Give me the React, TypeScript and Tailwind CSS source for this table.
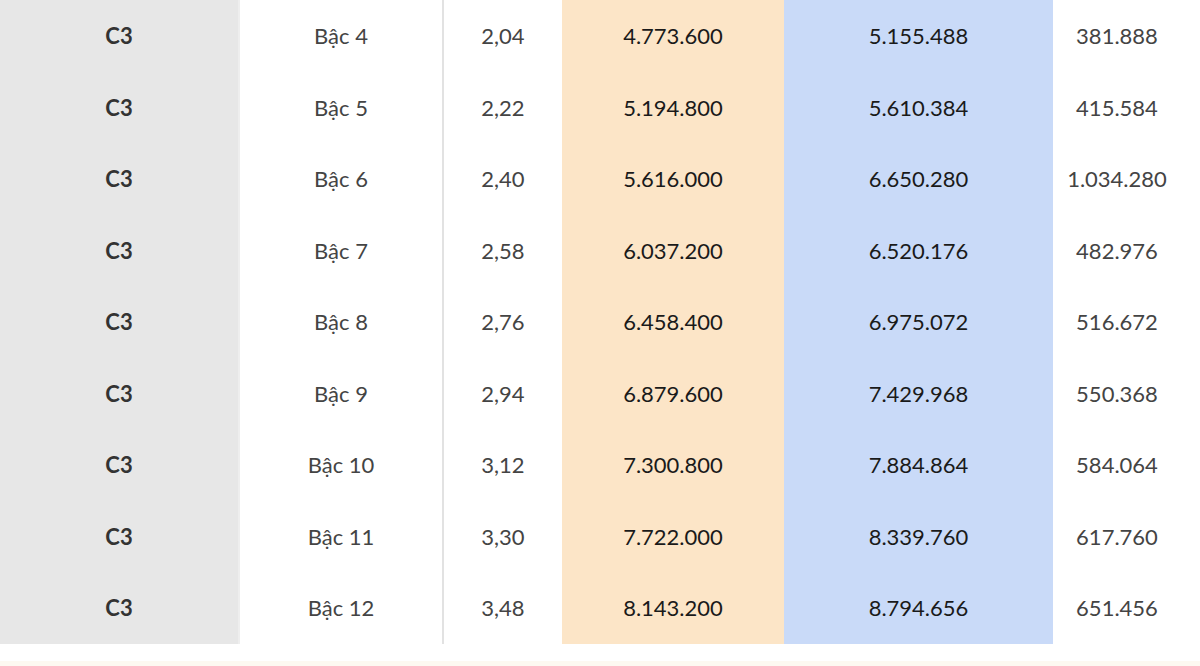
const rows = [
  ['Bậc 4', '2,04', '4.773.600', '5.155.488', '381.888'],
  ['Bậc 5', '2,22', '5.194.800', '5.610.384', '415.584'],
  ['Bậc 6', '2,40', '5.616.000', '6.650.280', '1.034.280'],
  ['Bậc 7', '2,58', '6.037.200', '6.520.176', '482.976'],
  ['Bậc 8', '2,76', '6.458.400', '6.975.072', '516.672'],
  ['Bậc 9', '2,94', '6.879.600', '7.429.968', '550.368'],
  ['Bậc 10', '3,12', '7.300.800', '7.884.864', '584.064'],
  ['Bậc 11', '3,30', '7.722.000', '8.339.760', '617.760'],
  ['Bậc 12', '3,48', '8.143.200', '8.794.656', '651.456'],
];

export default function App() {
  return (
    <div className="w-[1200px] h-[666px] overflow-hidden bg-white font-['Lato','Liberation_Sans',sans-serif] text-[22px]">
      <div className="grid grid-cols-[238px_2px_202px_120px_222px_269px_1fr]">
        {rows.map((r, i) => (
          <div key={i} className="contents">
            <div className="h-[71.5px] bg-[#e7e7e7] flex items-center justify-center font-bold text-[#333]">C3</div>
            <div className="bg-[#eeeeee]" />
            <div className="flex items-center justify-center text-[#444]">{r[0]}</div>
            <div className="flex items-center justify-center text-[#444] border-l-2 border-[#e2e2e2]">{r[1]}</div>
            <div className="flex items-center justify-center bg-[#fce5c7] text-[#1a1a1a]">{r[2]}</div>
            <div className="flex items-center justify-center bg-[#c9daf8] text-[#1a1a1a]">{r[3]}</div>
            <div className="flex items-center justify-center pr-[19px] text-[#444]">{r[4]}</div>
          </div>
        ))}
      </div>
      <div className="h-[17px]" />
      <div className="h-[10px] bg-[#fdf9f1]" />
    </div>
  );
}
